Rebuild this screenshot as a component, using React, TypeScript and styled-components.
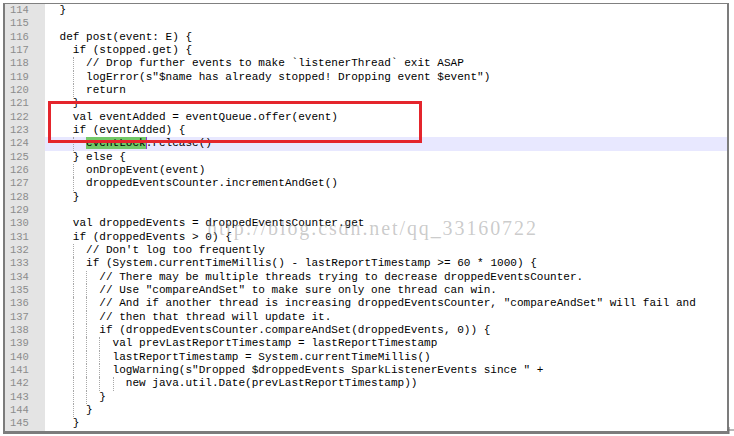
import React from "react";
import styled, { createGlobalStyle } from "styled-components";

const GlobalStyle = createGlobalStyle`
  html, body { margin: 0; padding: 0; background: #ffffff; }
  body { width: 734px; height: 436px; overflow: hidden; }
`;

const Page = styled.div`
  position: relative;
  width: 734px;
  height: 436px;
  box-sizing: border-box;
  padding: 3px 5px 0 3px;
  background: #ffffff;
`;

const Window = styled.div`
  position: relative;
  box-sizing: border-box;
  display: flex;
  flex-direction: column;
  border-top: 1px solid #808080;
  border-left: 2px solid #7c7c7c;
  border-right: 2px solid #7c7c7c;
  border-bottom: 3px solid #7c7c7c;
  overflow: hidden;
`;

const Row = styled.div`
  display: grid;
  grid-template-columns: 40px 1fr;
  height: 13.33px;
`;

const LineNo = styled.div`
  background: #e4e4e4;
  color: #8c8c8c;
  font-family: "Liberation Mono", "DejaVu Sans Mono", monospace;
  font-size: 10.5px;
  line-height: 13.33px;
  padding-left: 5px;
`;

const Code = styled.div<{ $current?: boolean }>`
  background: ${(p) => (p.$current ? "#e8e8ff" : "#ffffff")};
  color: #000000;
  font-family: "Liberation Mono", "DejaVu Sans Mono", monospace;
  font-size: 11.05px;
  line-height: 13.33px;
  white-space: pre;
  padding-left: 14.5px;
`;

const Indent = styled.span<{ $guide: boolean }>`
  display: inline-block;
  box-sizing: border-box;
  width: 2ch;
  height: 13.33px;
  vertical-align: top;
  border-left: 1px dotted ${(p) => (p.$guide ? "#a8a8a8" : "transparent")};
`;

const Hit = styled.span`
  background: #72c868;
  border-right: 1px solid #8a3bd6;
  margin-right: -1px;
`;

const RedBox = styled.div`
  position: absolute;
  left: 48px;
  top: 101px;
  width: 374px;
  height: 42px;
  box-sizing: border-box;
  border: 3px solid #e4252c;
  pointer-events: none;
`;

const Watermark = styled.div`
  position: absolute;
  left: 207px;
  top: 218px;
  font-family: "Liberation Serif", "DejaVu Serif", serif;
  font-size: 20px;
  line-height: 20px;
  letter-spacing: 1.9px;
  color: rgba(140, 140, 140, 0.45);
  white-space: nowrap;
  pointer-events: none;
`;

const Cursor = styled.svg`
  position: absolute;
  left: 726px;
  top: 426px;
`;

type Line = { n: number; indent: number; text: string; current?: boolean; hit?: string };

const lines: Line[] = [
  { n: 114, indent: 0, text: "}" },
  { n: 115, indent: 0, text: "" },
  { n: 116, indent: 0, text: "def post(event: E) {" },
  { n: 117, indent: 2, text: "if (stopped.get) {" },
  { n: 118, indent: 4, text: "// Drop further events to make `listenerThread` exit ASAP" },
  { n: 119, indent: 4, text: 'logError(s"$name has already stopped! Dropping event $event")' },
  { n: 120, indent: 4, text: "return" },
  { n: 121, indent: 2, text: "}" },
  { n: 122, indent: 2, text: "val eventAdded = eventQueue.offer(event)" },
  { n: 123, indent: 2, text: "if (eventAdded) {" },
  { n: 124, indent: 4, text: ".release()", current: true, hit: "eventLock" },
  { n: 125, indent: 2, text: "} else {" },
  { n: 126, indent: 4, text: "onDropEvent(event)" },
  { n: 127, indent: 4, text: "droppedEventsCounter.incrementAndGet()" },
  { n: 128, indent: 2, text: "}" },
  { n: 129, indent: 0, text: "" },
  { n: 130, indent: 2, text: "val droppedEvents = droppedEventsCounter.get" },
  { n: 131, indent: 2, text: "if (droppedEvents > 0) {" },
  { n: 132, indent: 4, text: "// Don't log too frequently" },
  { n: 133, indent: 4, text: "if (System.currentTimeMillis() - lastReportTimestamp >= 60 * 1000) {" },
  { n: 134, indent: 6, text: "// There may be multiple threads trying to decrease droppedEventsCounter." },
  { n: 135, indent: 6, text: '// Use "compareAndSet" to make sure only one thread can win.' },
  { n: 136, indent: 6, text: '// And if another thread is increasing droppedEventsCounter, "compareAndSet" will fail and' },
  { n: 137, indent: 6, text: "// then that thread will update it." },
  { n: 138, indent: 6, text: "if (droppedEventsCounter.compareAndSet(droppedEvents, 0)) {" },
  { n: 139, indent: 8, text: "val prevLastReportTimestamp = lastReportTimestamp" },
  { n: 140, indent: 8, text: "lastReportTimestamp = System.currentTimeMillis()" },
  { n: 141, indent: 8, text: 'logWarning(s"Dropped $droppedEvents SparkListenerEvents since " +' },
  { n: 142, indent: 10, text: "new java.util.Date(prevLastReportTimestamp))" },
  { n: 143, indent: 6, text: "}" },
  { n: 144, indent: 4, text: "}" },
  { n: 145, indent: 2, text: "}" },
];

function CodeLine({ line }: { line: Line }) {
  const levels = Array.from({ length: line.indent / 2 }, (_, k) => k);
  return (
    <Row>
      <LineNo>{line.n}</LineNo>
      <Code $current={line.current}>
        {levels.map((k) => (
          <Indent key={k} $guide={k > 0} />
        ))}
        {line.hit && <Hit>{line.hit}</Hit>}
        {line.text}
      </Code>
    </Row>
  );
}

export default function App() {
  return (
    <>
      <GlobalStyle />
      <Page>
        <Window>
          {lines.map((l) => (
            <CodeLine key={l.n} line={l} />
          ))}
        </Window>
        <Watermark>http://blog.csdn.net/qq_33160722</Watermark>
        <RedBox />
        <Cursor width="8" height="9" viewBox="0 0 8 9">
          <path d="M3 1v7M1 4h7" stroke="#707070" strokeWidth="1" fill="none" />
        </Cursor>
      </Page>
    </>
  );
}
